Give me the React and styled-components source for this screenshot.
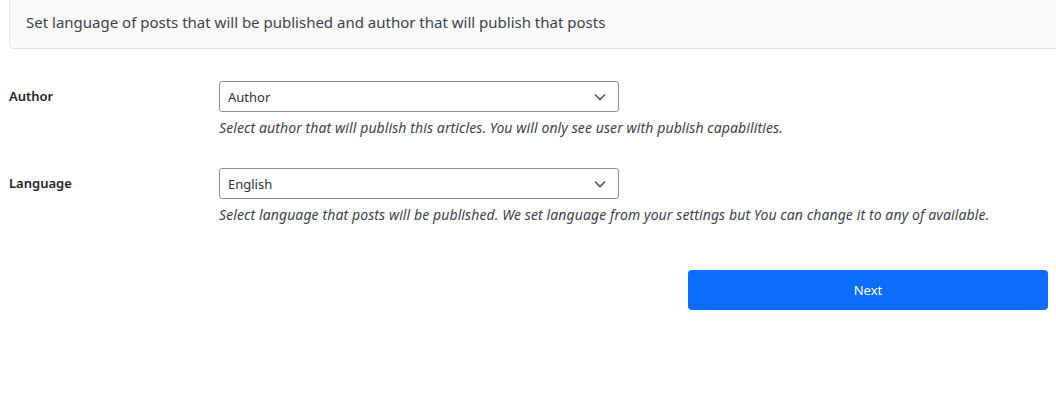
import styled, { createGlobalStyle } from 'styled-components';

const fontStack = '"Noto Sans", "Open Sans", sans-serif';

const GlobalStyle = createGlobalStyle`
    html, body {
        margin: 0;
        padding: 0;
        background: #ffffff;
        font-family: ${fontStack};
        overflow: hidden;
    }
`;

const Page = styled.div`
    width: 1056px;
    height: 403px;
    padding-left: 9px;
    box-sizing: border-box;
`;

const Notice = styled.div`
    margin-right: -12px;
    height: 49px;
    box-sizing: border-box;
    display: flex;
    align-items: center;
    padding: 0 16px 4px;
    background: #fafafa;
    border: 1px solid #e4e4e4;
    border-top: none;
    border-radius: 0 0 5px 5px;
    color: #3c434a;
    font-size: 15px;
`;

const Form = styled.div`
    display: flex;
    flex-direction: column;
    gap: 30px;
    padding-top: 32px;
`;

const Row = styled.div`
    display: grid;
    grid-template-columns: 210px 1fr;
    align-items: start;
`;

const Label = styled.label`
    font-size: 13px;
    font-weight: 600;
    color: #1d2327;
    line-height: 31px;
`;

const Field = styled.div`
    display: flex;
    flex-direction: column;
    gap: 6px;
`;

const SelectBox = styled.div`
    width: 400px;
    height: 31px;
    box-sizing: border-box;
    border: 1px solid #8c8f94;
    border-radius: 3px;
    display: flex;
    align-items: center;
    justify-content: space-between;
    padding: 0 12px 0 8px;
    font-size: 13px;
    color: #2c3338;
`;

const Hint = styled.p`
    margin: 0;
    font-size: 14px;
    letter-spacing: 0.1px;
    line-height: 20px;
    font-style: italic;
    color: #3c434a;
`;

const Actions = styled.div`
    display: flex;
    justify-content: flex-end;
    padding: 45px 8px 0 0;
`;

const Button = styled.button`
    width: 360px;
    height: 40px;
    border: none;
    border-radius: 4px;
    background: #0d6efd;
    color: #ffffff;
    font-family: ${fontStack};
    font-size: 13px;
`;

const Chevron = () => (
    <svg width="12" height="8" viewBox="0 0 12 8" fill="none">
        <path d="M1 1.5L6 6.5L11 1.5" stroke="#50575e" strokeWidth="1.6" />
    </svg>
);

const rows = [
    {
        label: 'Author',
        value: 'Author',
        hint: 'Select author that will publish this articles. You will only see user with publish capabilities.',
    },
    {
        label: 'Language',
        value: 'English',
        hint: 'Select language that posts will be published. We set language from your settings but You can change it to any of available.',
    },
];

const App = () => {
    return (
        <Page>
            <GlobalStyle />
            <Notice>Set language of posts that will be published and author that will publish that posts</Notice>
            <Form>
                {rows.map((row) => (
                    <Row key={row.label}>
                        <Label>{row.label}</Label>
                        <Field>
                            <SelectBox>
                                <span>{row.value}</span>
                                <Chevron />
                            </SelectBox>
                            <Hint>{row.hint}</Hint>
                        </Field>
                    </Row>
                ))}
            </Form>
            <Actions>
                <Button>Next</Button>
            </Actions>
        </Page>
    );
};

export default App;
